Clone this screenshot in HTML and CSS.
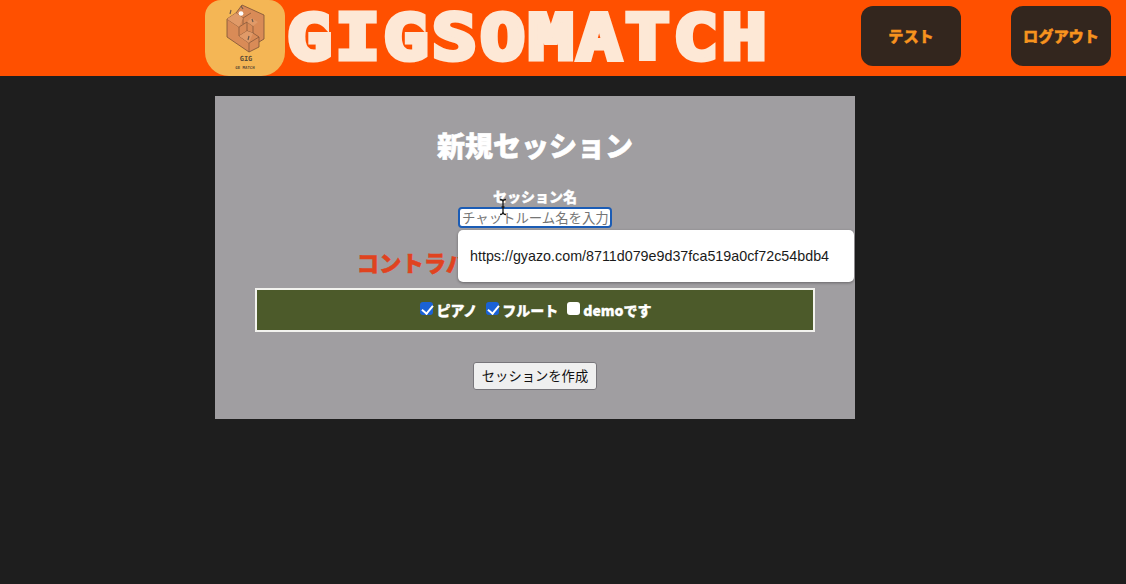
FILE: index.html
```html
<!DOCTYPE html>
<html lang="ja">
<head>
<meta charset="utf-8">
<title>GIGSOMATCH</title>
<link rel="stylesheet" href="styles.css">
</head>
<body>
<header class="header">
  <div class="logo">
    <svg class="logo-art" viewBox="0 0 80 76" width="80" height="76" aria-hidden="true">
      <path d="M37 5 59 15V39L54 42V47L44 52 22 37V19L31 13Z" fill="#d98b57" stroke="#7a5236" stroke-width=".8"/>
      <path d="M22 19 34 27V36L44 43V52M34 27 42 22 48 26V33L54 37V42M34 36 42 31 48 33M44 43 54 37M31 13 38 18 46 13M38 18V24M42 31V22" fill="none" stroke="#7a5236" stroke-width=".7"/>
      <path d="M22 19 31 13 38 18 34 27Z M42 22 46 18 53 22 48 26Z M34 36 42 31 48 33 44 43Z" fill="#e09a68"/>
      <ellipse cx="36" cy="13.500" rx="2.400" ry="2.200" fill="#fff"/>
      <path d="M36 6 38 9M26 10 25 14M47 19 48 22M44 36 43 40" stroke="#6b5a4d" stroke-width="1.200"/>
      <text class="logo-name" x="41" y="61" text-anchor="middle">GIG</text>
      <text class="logo-sub" x="40" y="69" text-anchor="middle">GE MATCH</text>
    </svg>
  </div>
  <div class="brand">GIGSOMATCH</div>
  <nav class="nav">
    <a class="nav-btn">テスト</a>
    <a class="nav-btn">ログアウト</a>
  </nav>
</header>

<main class="page">
  <form class="card">
    <h1 class="title">新規セッション</h1>
    <div class="field">
      <label class="field-label">セッション名</label>
      <input class="field-input" placeholder="チャットルーム名を入力">
      <svg class="ibeam" viewBox="0 0 10 18" width="10" height="18" aria-hidden="true">
        <path d="M2 1.500C4 1.500 5 2.500 5 4V14C5 15.500 4 16.500 2 16.500M8 1.500C6 1.500 5 2.500 5 4M5 14C5 15.500 6 16.500 8 16.500M3.500 9H6.500" fill="none" stroke="#1a1a1a" stroke-width="1.300"/>
      </svg>
      <div class="popup">https://gyazo.com/8711d079e9d37fca519a0cf72c54bdb4</div>
    </div>
    <p class="notice">コントラバスを選択してください！</p>
    <div class="instruments">
      <label class="instrument"><input type="checkbox" class="check" checked>ピアノ</label>
      <label class="instrument"><input type="checkbox" class="check" checked>フルート</label>
      <label class="instrument"><input type="checkbox" class="check">demoです</label>
    </div>
    <button type="button" class="submit">セッションを作成</button>
  </form>
</main>
</body>
</html>
```

FILE: styles.css
```css
* { box-sizing: border-box; }

html, body { height: 100%; }

body {
  margin: 0;
  background: #1e1e1e;
  font-family: "Noto Sans CJK JP", "Noto Sans", sans-serif;
  overflow: hidden;
}

.header {
  height: 76px;
  background: #ff5000;
  display: flex;
  align-items: center;
  padding: 0 15px 0 205px;
}

.logo {
  width: 80px;
  height: 76px;
  background: #f4b655;
  border-radius: 16px 16px 24px 24px;
  flex: none;
}

.logo-art { display: block; }

.logo-name {
  font: 700 7px "DejaVu Sans Mono", monospace;
  fill: #5c4a35;
}

.logo-sub {
  font: 700 4px "DejaVu Sans Mono", monospace;
  fill: #5c4a35;
}

.brand {
  margin-left: 2px;
  font-family: "DejaVu Sans Mono", monospace;
  font-weight: 700;
  font-size: 63px;
  line-height: 76px;
  letter-spacing: 3px;
  color: #fde8d6;
  -webkit-text-stroke: 5px #fde8d6;
  white-space: nowrap;
  transform: scaleX(1.18);
  transform-origin: left center;
}

.nav {
  margin-left: auto;
  margin-bottom: 4px;
  display: flex;
  gap: 50px;
}

.nav-btn {
  width: 100px;
  height: 60px;
  border-radius: 12px;
  background: #33261e;
  color: #f7931e;
  display: flex;
  align-items: center;
  justify-content: center;
  padding-bottom: 2px;
  font-size: 15.200px;
  font-weight: 900;
  -webkit-text-stroke: .4px #f7931e;
}

.page {
  padding-top: 20px;
  padding-left: 215px;
}

.card {
  width: 640px;
  height: 323px;
  background: #a09ea1;
  display: flex;
  flex-direction: column;
  align-items: center;
  padding-top: 29px;
}

.title {
  margin: 0;
  font-size: 28px;
  line-height: 40px;
  font-weight: 900;
  color: #fff;
  -webkit-text-stroke: .6px #fff;
}

.field {
  position: relative;
  margin-top: 21px;
  display: flex;
  flex-direction: column;
  align-items: center;
}

.field-label {
  font-size: 14px;
  line-height: 20px;
  font-weight: 900;
  color: #fff;
  margin-bottom: 1px;
  -webkit-text-stroke: .3px #fff;
}

.field-input {
  width: 154px;
  height: 21px;
  padding: 0 1px 2px 2px;
  border: 2px solid #1b5cb5;
  border-radius: 4px;
  outline: none;
  background: #fff;
  font-family: "Noto Sans CJK JP", sans-serif;
  font-size: 13.400px;
}

.field-input::placeholder { color: #757575; opacity: 1; }

.ibeam {
  position: absolute;
  left: 40px;
  top: 12px;
}

.popup {
  position: absolute;
  left: 0;
  top: 44px;
  width: 396px;
  height: 52px;
  padding-left: 12px;
  display: flex;
  align-items: center;
  background: #fff;
  border-radius: 5px;
  box-shadow: 0 1px 3px rgba(0, 0, 0, .35);
  font-family: "Liberation Sans", Arial, sans-serif;
  font-size: 14.300px;
  color: #1a1a1a;
  white-space: nowrap;
}

.notice {
  margin: 19px 0 0;
  font-size: 22.400px;
  line-height: 30px;
  font-weight: 900;
  color: #e0431f;
  white-space: nowrap;
  -webkit-text-stroke: .5px #e0431f;
}

.instruments {
  width: 560px;
  height: 44px;
  margin-top: 11px;
  padding-left: 2px;
  background: #4c5a2a;
  border: 2px solid #f2f2ee;
  display: flex;
  align-items: center;
  justify-content: center;
  gap: 9px;
}

.instrument {
  display: flex;
  align-items: center;
  font-size: 14px;
  font-weight: 900;
  color: #fff;
  -webkit-text-stroke: .3px #fff;
}

.check {
  appearance: none;
  display: block;
  position: relative;
  width: 13px;
  height: 13px;
  margin: 0 3px 3px 0;
  border-radius: 3px;
  background: #fff;
}

.check:checked { background: #1a62d6; }

.check:checked::after {
  content: "";
  position: absolute;
  left: 4px;
  top: 1px;
  width: 5px;
  height: 9px;
  border: solid #fff;
  border-width: 0 2px 2px 0;
  transform: rotate(40deg);
}

.submit {
  margin-top: 30px;
  width: 124px;
  height: 28px;
  padding: 0 0 2px;
  border: 1px solid #77757a;
  border-radius: 3px;
  background: #efefef;
  font-family: "Noto Sans CJK JP", sans-serif;
  font-size: 13.300px;
  color: #111;
}
```
